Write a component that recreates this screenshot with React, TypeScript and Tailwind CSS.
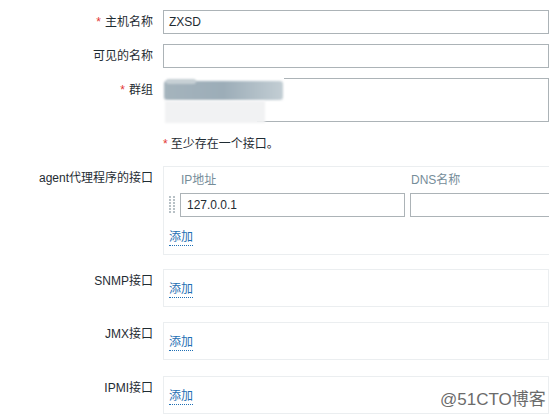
import React from "react";

const font = { fontFamily: '"Liberation Sans", Arial, "Noto Sans CJK SC", sans-serif' };

function Req() {
  return <span className="text-[#e33734] mr-[4px]">*</span>;
}

function AddLink() {
  return (
    <span className="text-[#1f6fb4] border-b border-dotted border-[#1f6fb4] leading-[15px] inline-block">
      添加
    </span>
  );
}

function Handle() {
  return (
    <div className="grid grid-cols-2 gap-x-[2px] gap-y-[1px] w-[5px] mt-[2px]">
      {Array.from({ length: 12 }).map((_, i) => (
        <div key={i} className="w-[2px] h-[2px] bg-[#b8c1c6]" />
      ))}
    </div>
  );
}

export default function App() {
  return (
    <div
      style={font}
      className="relative w-[549px] h-[417px] overflow-hidden bg-white text-[12px] text-[#1f2c33] pt-[10px]"
    >
      {/* host name */}
      <div className="flex">
        <div className="w-[153px] shrink-0 text-right leading-[24px]">
          <Req />主机名称
        </div>
        <div className="ml-[10px] w-[500px] h-[24px] border border-[#acb3b7] px-[5px] leading-[22px]">
          ZXSD
        </div>
      </div>

      {/* visible name */}
      <div className="flex mt-[10px]">
        <div className="w-[153px] shrink-0 text-right leading-[24px]">可见的名称</div>
        <div className="ml-[10px] w-[500px] h-[24px] border border-[#acb3b7]" />
      </div>

      {/* groups */}
      <div className="flex mt-[10px]">
        <div className="w-[153px] shrink-0 text-right leading-[24px]">
          <Req />群组
        </div>
        <div className="ml-[10px] w-[500px] h-[44px] border border-[#acb3b7] relative">
          <div className="absolute -left-[1px] -top-[1px] w-[3px] h-[46px] bg-white" />
          <div className="absolute -left-[1px] -top-[1px] w-[121px] h-[3px] bg-white" />
          <div className="absolute -left-[1px] -bottom-[1px] w-[94px] h-[3px] bg-white" />
          <div className="absolute left-[0px] top-[2px] w-[119px] h-[19px] rounded-[3px] bg-gradient-to-r from-[#a5b4bd] via-[#9cadb8] to-[#c3ced4] blur-[1px]" />
          <div className="absolute left-[2px] top-[0px] w-[30px] h-[5px] rounded-[3px] bg-[#c7d0d5] blur-[1px]" />
          <div className="absolute left-[1px] top-[22px] w-[100px] h-[22px] bg-[#f1f2f3] blur-[1px]" />
        </div>
      </div>

      {/* at least one interface */}
      <div className="flex mt-[10px]">
        <div className="w-[153px] shrink-0" />
        <div className="ml-[10px] leading-[24px]">
          <span className="text-[#e33734] mr-[3px]">*</span>至少存在一个接口。
        </div>
      </div>

      {/* agent */}
      <div className="flex mt-[10px]">
        <div className="w-[153px] shrink-0 text-right leading-[24px]">agent代理程序的接口</div>
        <div className="ml-[10px] w-[500px] h-[89px] border border-[#ebeef0] pl-[5px] pt-[5px]">
          <div className="flex text-[#768d99] leading-[16px]">
            <div className="w-[11px]" />
            <div className="w-[224px] pl-[1px]">IP地址</div>
            <div className="ml-[6px] pl-[1px]">DNS名称</div>
          </div>
          <div className="flex mt-[5px] items-start">
            <div className="w-[11px] pt-[1px]">
              <Handle />
            </div>
            <div className="w-[225px] h-[24px] border border-[#acb3b7] px-[6px] leading-[22px]">
              127.0.0.1
            </div>
            <div className="ml-[5px] w-[200px] h-[24px] border border-[#acb3b7]" />
          </div>
          <div className="mt-[11px]">
            <AddLink />
          </div>
        </div>
      </div>

      {/* SNMP */}
      <div className="flex mt-[14px]">
        <div className="w-[153px] shrink-0 text-right leading-[24px]">SNMP接口</div>
        <div className="ml-[10px] w-[500px] h-[38px] border border-[#ebeef0] pl-[5px] pt-[3px] flex items-center">
          <AddLink />
        </div>
      </div>

      {/* JMX */}
      <div className="flex mt-[15px]">
        <div className="w-[153px] shrink-0 text-right leading-[24px]">JMX接口</div>
        <div className="ml-[10px] w-[500px] h-[38px] border border-[#ebeef0] pl-[5px] pt-[3px] flex items-center">
          <AddLink />
        </div>
      </div>

      {/* IPMI */}
      <div className="flex mt-[16px]">
        <div className="w-[153px] shrink-0 text-right leading-[24px]">IPMI接口</div>
        <div className="ml-[10px] w-[500px] h-[38px] border border-[#ebeef0] pl-[5px] pt-[3px] flex items-center">
          <AddLink />
        </div>
      </div>

      {/* watermark */}
      <div className="absolute left-[440px] top-[390px] text-[17px] leading-[20px] text-[#6b6b6b] [text-shadow:0_0_2px_#fff]">
        @51CTO博客
      </div>
    </div>
  );
}
